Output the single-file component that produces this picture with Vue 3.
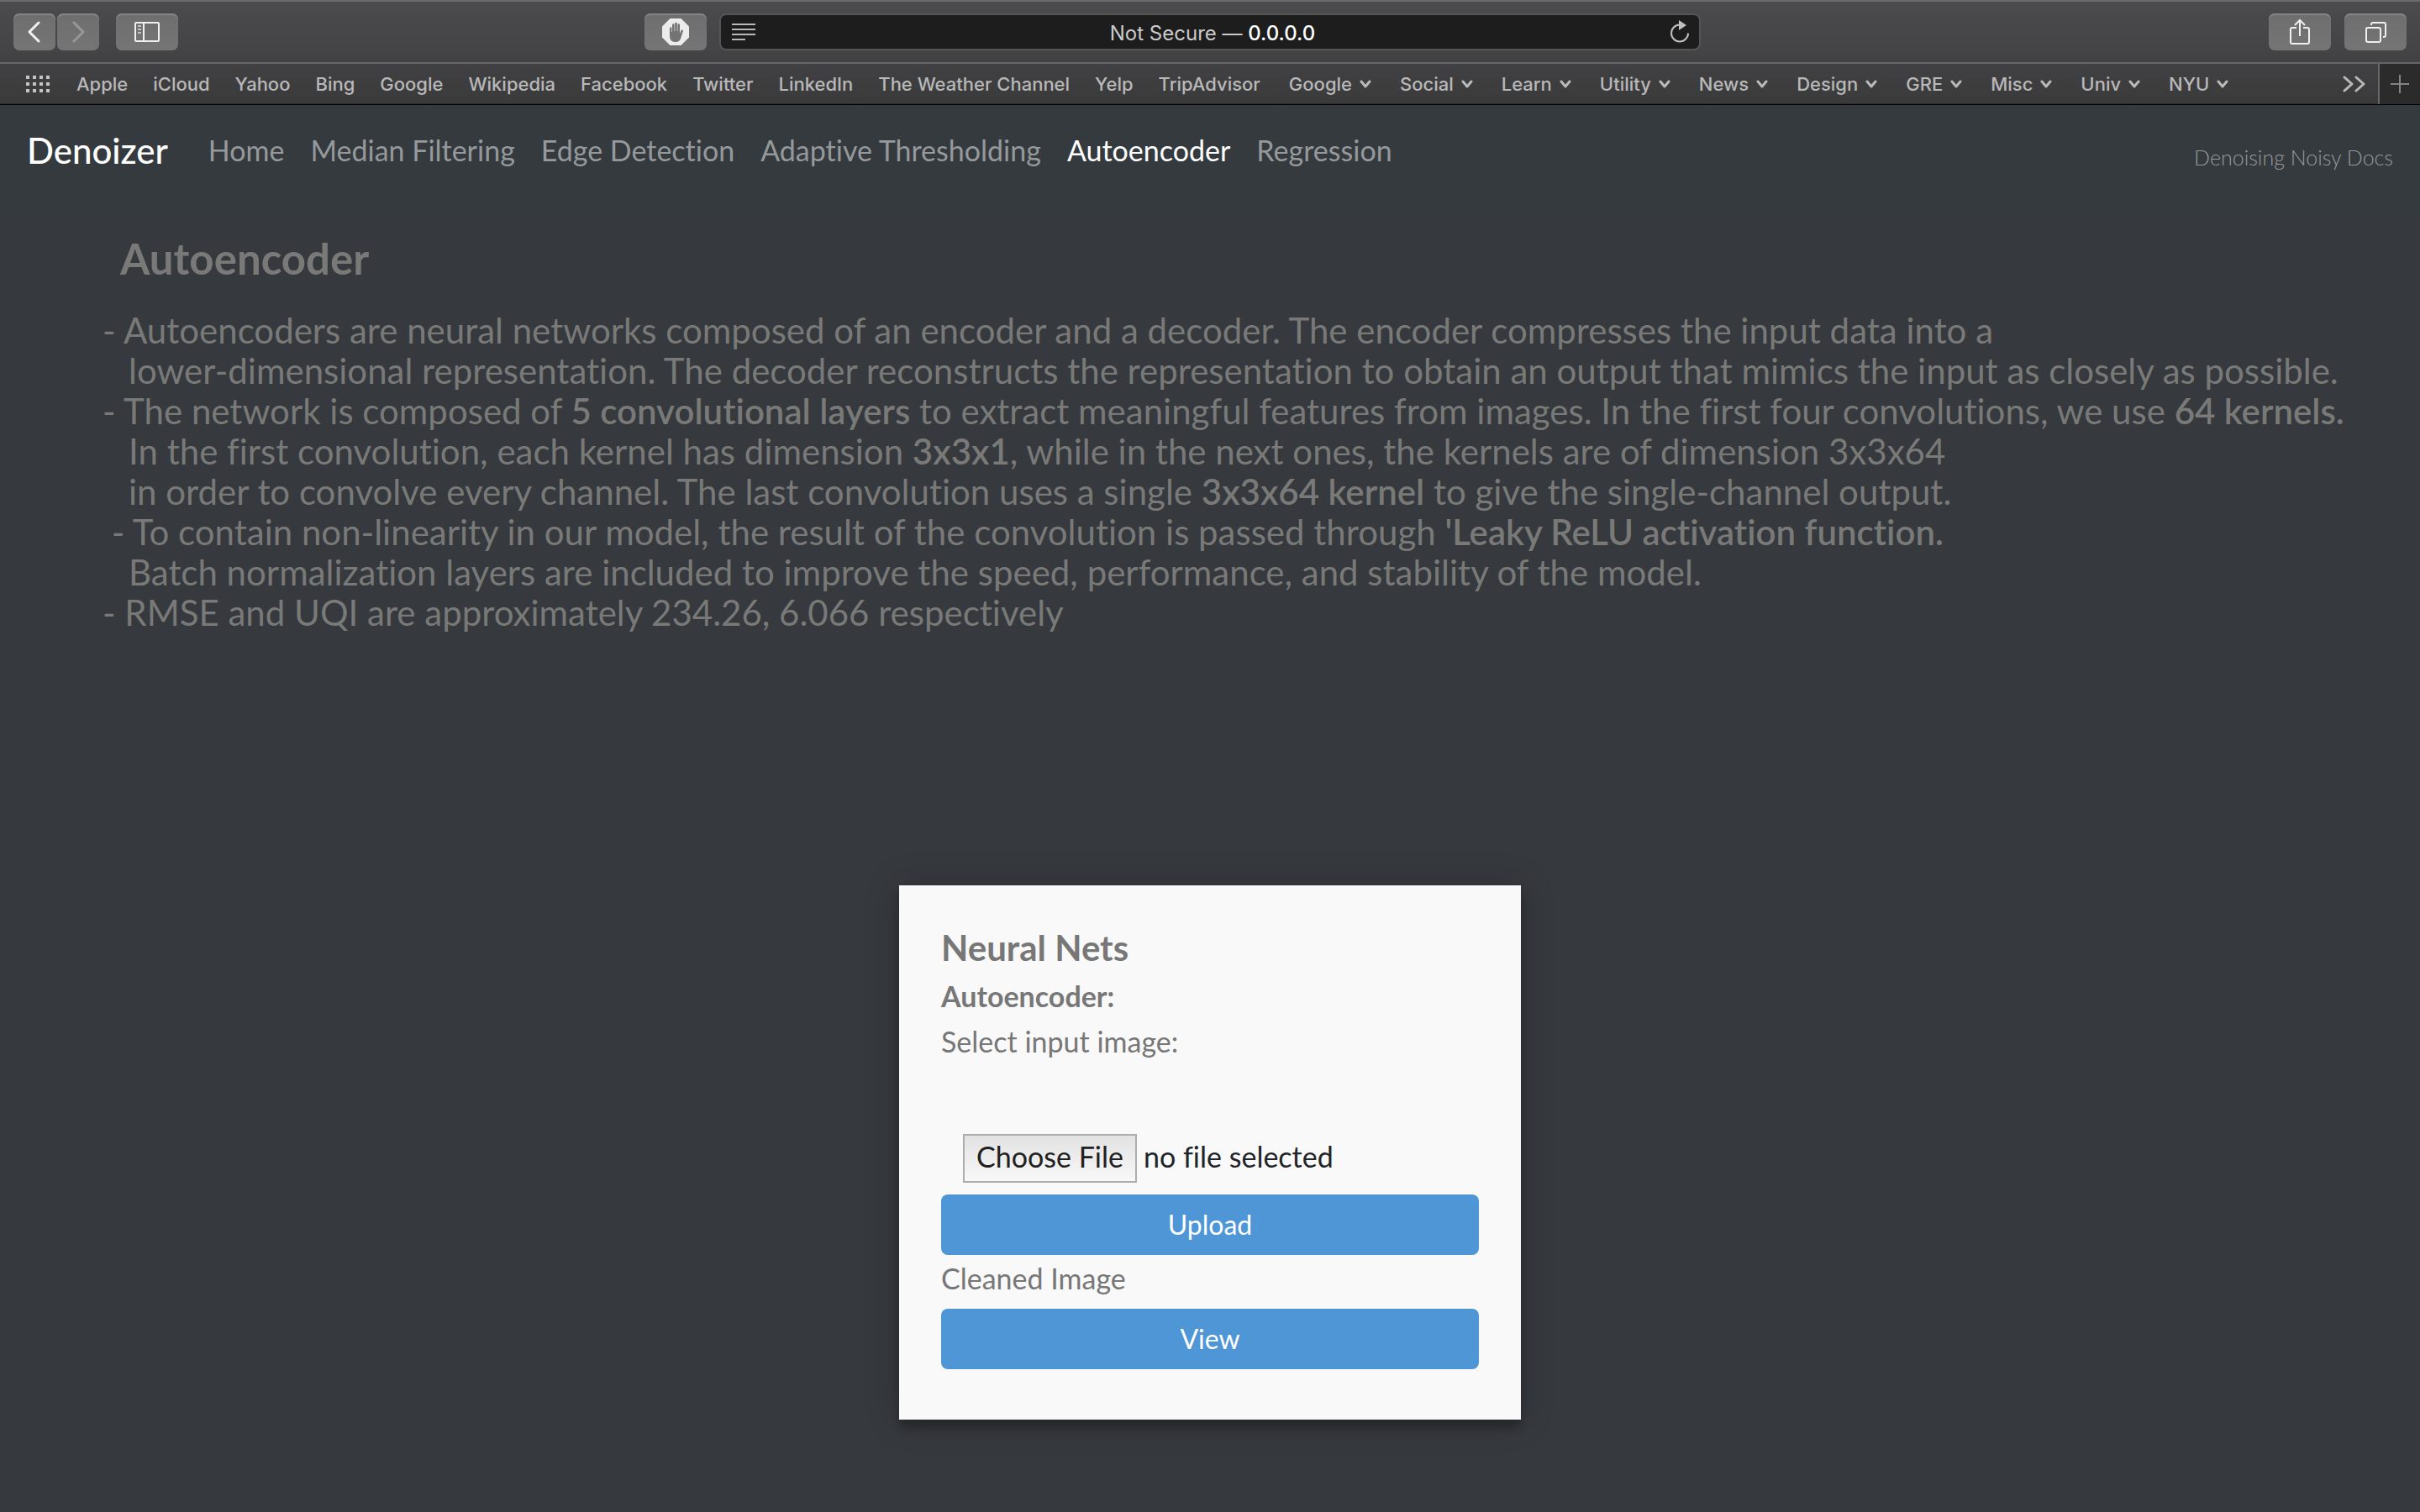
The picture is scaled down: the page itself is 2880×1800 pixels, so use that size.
<script setup>
const bookmarks = [
  'Apple', 'iCloud', 'Yahoo', 'Bing', 'Google', 'Wikipedia', 'Facebook',
  'Twitter', 'LinkedIn', 'The Weather Channel', 'Yelp', 'TripAdvisor',
]
const folders = ['Google', 'Social', 'Learn', 'Utility', 'News', 'Design', 'GRE', 'Misc', 'Univ', 'NYU']
const pages = [
  'Home', 'Median Filtering', 'Edge Detection', 'Adaptive Thresholding', 'Autoencoder', 'Regression',
]
const current = 'Autoencoder'
const dots = [0, 8, 16, 24].flatMap((x) => [0, 8, 16].map((y) => ({ x, y })))
</script>

<template>
  <div class="window">
    <header class="browser">
      <div class="toolbar">
        <div class="side">
          <div class="group">
            <button class="tool narrow" type="button" aria-label="Back">
              <svg width="20" height="28" viewBox="0 0 20 28"><path d="M15 3 4 14l11 11" stroke="#f0f0f0" stroke-width="3" fill="none" stroke-linecap="round" stroke-linejoin="round" /></svg>
            </button>
            <button class="tool narrow" type="button" aria-label="Forward">
              <svg width="20" height="28" viewBox="0 0 20 28"><path d="M5 3l11 11L5 25" stroke="#989899" stroke-width="3" fill="none" stroke-linecap="round" stroke-linejoin="round" /></svg>
            </button>
          </div>
          <button class="tool" type="button" aria-label="Show sidebar">
            <svg width="30" height="24" viewBox="0 0 30 24">
              <rect x="1" y="1" width="28" height="22" rx="1" fill="none" stroke="#f0f0f0" stroke-width="2" />
              <path d="M11 1v22" stroke="#f0f0f0" stroke-width="2" />
              <path d="M4 5h4M4 9h4M4 13h4" stroke="#c4c4c4" stroke-width="2" />
            </svg>
          </button>
          <button class="tool blocker" type="button" aria-label="Ad blocker">
            <svg width="32" height="32" viewBox="0 0 32 32">
              <path d="M9.500 0h13L32 9.500v13L22.500 32h-13L0 22.500v-13z" fill="#ececec" />
              <path d="M9 11.500a1.200 1.200 0 0 1 2.400 0V16h.6V7.500a1.300 1.300 0 0 1 2.600 0V15h.6V6a1.300 1.300 0 0 1 2.600 0v9h.6V7.500a1.300 1.300 0 0 1 2.600 0V18l1.400-3.600c.7-1.600 2.900-1 2.400.8L22 24c-1 2.700-3 4-6 4-4.500 0-7-2.500-7-7z" fill="#747475" />
            </svg>
          </button>
        </div>
        <div class="address">
          <svg width="28" height="20" viewBox="0 0 28 20"><path d="M0 1h28M0 7h28M0 13h28M0 19h16" stroke="#b9b9b9" stroke-width="2" /></svg>
          <span class="url">Not Secure — <span class="host">0.0.0.0</span></span>
          <button class="reload" type="button" aria-label="Reload">
            <svg width="24" height="28" viewBox="0 0 24 28">
              <path d="M12 5.500A10 10 0 1 0 22 15.500" fill="none" stroke="#c0c0c0" stroke-width="2" />
              <path d="M11 0l9 6-9 6z" fill="#c0c0c0" />
            </svg>
          </button>
        </div>
        <div class="side end">
          <button class="tool" type="button" aria-label="Share">
            <svg width="24" height="32" viewBox="0 0 24 32">
              <path d="M8 11H3a2 2 0 0 0-2 2v15a2 2 0 0 0 2 2h18a2 2 0 0 0 2-2V13a2 2 0 0 0-2-2h-5M12 21V2M6 8l6-6 6 6" fill="none" stroke="#f0f0f0" stroke-width="2" />
            </svg>
          </button>
          <button class="tool" type="button" aria-label="Show all tabs">
            <svg width="26" height="26" viewBox="0 0 26 26">
              <rect x="2" y="8" width="17" height="17" rx="2" fill="none" stroke="#f0f0f0" stroke-width="2" />
              <path d="M8 5V4a2 2 0 0 1 2-2h13a2 2 0 0 1 2 2v13a2 2 0 0 1-2 2h-1" fill="none" stroke="#f0f0f0" stroke-width="2" />
            </svg>
          </button>
        </div>
      </div>

      <nav class="favorites" aria-label="Favorites">
        <button class="plain" type="button" aria-label="Show favorites">
          <svg width="28" height="20" viewBox="0 0 28 20">
            <rect v-for="d in dots" :key="`${d.x}-${d.y}`" :x="d.x" :y="d.y" width="4" height="4" fill="#c4c4c4" />
          </svg>
        </button>
        <div class="links">
          <a v-for="b in bookmarks" :key="b" href="#">{{ b }}</a>
          <a v-for="f in folders" :key="f" class="folder" href="#">
            {{ f }}
            <svg width="14" height="12" viewBox="0 0 14 12"><path d="M2 3l5 6 5-6" fill="none" stroke="#bababa" stroke-width="3" stroke-linecap="round" stroke-linejoin="round" /></svg>
          </a>
        </div>
        <button class="plain more" type="button" aria-label="More favorites">
          <svg width="28" height="20" viewBox="0 0 28 20"><path d="M2 2l9 8-9 8M16 2l9 8-9 8" fill="none" stroke="#bababa" stroke-width="3" stroke-linecap="round" stroke-linejoin="round" /></svg>
        </button>
        <button class="new-tab" type="button" aria-label="New tab">
          <svg width="22" height="22" viewBox="0 0 22 22"><path d="M11 0v22M0 11h22" stroke="#858585" stroke-width="2" /></svg>
        </button>
      </nav>
    </header>

    <nav class="navbar" aria-label="Main">
      <a class="brand" href="#">Denoizer</a>
      <div class="pages">
        <a v-for="p in pages" :key="p" href="#" :class="{ active: p === current }">{{ p }}</a>
      </div>
      <span class="tagline">Denoising Noisy Docs</span>
    </nav>

    <main>
      <h1>Autoencoder</h1>
      <div class="notes">
        <p>- Autoencoders are neural networks composed of an encoder and a decoder. The encoder compresses the input data into a</p>
        <p class="cont">lower-dimensional representation. The decoder reconstructs the representation to obtain an output that mimics the input as closely as possible.</p>
        <p>- The network is composed of <b>5 convolutional layers</b> to extract meaningful features from images. In the first four convolutions, we use <b>64 kernels.</b></p>
        <p class="cont">In the first convolution, each kernel has dimension <b>3x3x1</b>, while in the next ones, the kernels are of dimension 3x3x64</p>
        <p class="cont">in order to convolve every channel. The last convolution uses a single <b>3x3x64 kernel</b> to give the single-channel output.</p>
        <p>&nbsp;- To contain non-linearity in our model, the result of the convolution is passed through <b>'Leaky ReLU activation function.</b></p>
        <p class="cont">Batch normalization layers are included to improve the speed, performance, and stability of the model.</p>
        <p>- RMSE and UQI are approximately 234.26, 6.066 respectively</p>
      </div>

      <form class="card" @submit.prevent>
        <h2>Neural Nets</h2>
        <h3>Autoencoder:</h3>
        <label for="picture">Select input image:</label>
        <div class="file">
          <input id="picture" type="file" />
          <span>no file selected</span>
        </div>
        <button class="action" type="submit">Upload</button>
        <p class="result">Cleaned Image</p>
        <button class="action" type="button">View</button>
      </form>
    </main>
  </div>
</template>

<style>
body {
  margin: 0;
  background: #36393e;
}
</style>

<style scoped>
.window {
  min-height: 100vh;
  font-family: Lato, "Open Sans", sans-serif;
  font-variant-ligatures: no-common-ligatures;
  background: #36393e;
}
button {
  font-family: inherit;
  border: 0;
  padding: 0;
  cursor: pointer;
}
a {
  color: inherit;
  text-decoration: none;
}
svg {
  display: block;
  flex: none;
}

.browser {
  font-family: Inter, "Liberation Sans", sans-serif;
}
.toolbar {
  display: grid;
  grid-template-columns: 1fr 41% 1fr;
  align-items: center;
  padding: 14px 16px;
  border-top: 2px solid #6a6b6d;
  border-bottom: 2px solid #656667;
  background: linear-gradient(#4b4b4d, #424244);
}
.side {
  display: flex;
  gap: 20px;
}
.side.end {
  gap: 16px;
  justify-content: flex-end;
}
.group {
  display: flex;
  gap: 2px;
}
.tool {
  display: flex;
  align-items: center;
  justify-content: center;
  width: 74px;
  height: 44px;
  border-radius: 7px;
  background: linear-gradient(#6e6e6f, #757576);
  box-shadow: inset 0 2px 0 #848485;
}
.narrow {
  width: 50px;
}
.blocker {
  margin: 0 15px 0 auto;
}
.address {
  box-sizing: border-box;
  display: flex;
  align-items: center;
  justify-content: space-between;
  height: 44px;
  padding: 0 11px 0 13px;
  border: 2px solid #555556;
  border-radius: 8px;
  background: #1d1d1d;
}
.url {
  padding-top: 3px;
  font-size: 24px;
  line-height: 30px;
  color: #cacaca;
}
.host {
  font-weight: 500;
  color: #fff;
}
.reload {
  background: none;
}

.favorites {
  display: flex;
  align-items: center;
  height: 48px;
  padding-left: 31px;
  border-bottom: 1px solid #000;
  box-shadow: inset 0 -1px 0 #2d2d2e;
  background: linear-gradient(#414143, #3a3a3b);
  margin-bottom: 1px;
}
.plain {
  background: none;
}
.links {
  display: flex;
  gap: 30px;
  margin-left: 32px;
  font-size: 22px;
  line-height: 28px;
  font-weight: 500;
  white-space: nowrap;
  color: #b8b8b9;
}
.folder {
  display: flex;
  align-items: center;
  gap: 9px;
  margin-left: 4px;
}
.more {
  margin-left: auto;
  margin-right: 14px;
}
.new-tab {
  display: flex;
  align-items: center;
  align-self: stretch;
  justify-content: center;
  width: 50px;
  border-left: 2px solid #656667;
  background: #2b2b2c;
}

.navbar {
  display: flex;
  align-items: center;
  padding: 29px 32px 55px;
  background: #343a3e;
}
.brand {
  font-size: 42px;
  line-height: 48px;
  font-weight: 500;
  color: #fff;
}
.pages {
  display: flex;
  gap: 31px;
  margin-left: 48px;
  font-size: 34px;
  line-height: 40px;
  color: #96999b;
}
.active {
  color: #fff;
}
.tagline {
  align-self: flex-end;
  margin-bottom: 1px;
  margin-left: auto;
  font-size: 25px;
  line-height: 30px;
  font-weight: 300;
  color: #96999b;
}

main {
  color: #797978;
}
h1,
h2,
h3,
p {
  margin: 0;
}
h1 {
  margin: 20px 0 31px 143px;
  font-size: 51px;
  line-height: 60px;
  font-weight: 700;
}
.notes {
  margin: 0 40px 0 122px;
  font-size: 42px;
  line-height: 48px;
}
.notes b {
  font-weight: 600;
}
.cont {
  padding-left: 31px;
}

.card {
  box-sizing: border-box;
  display: flex;
  flex-direction: column;
  width: 740px;
  max-width: 100%;
  margin: 301px auto 0;
  padding: 50px 50px 60px;
  font-size: 34px;
  line-height: 40px;
  color: #777;
  background: #f9f9f9;
  box-shadow: 0 0 40px rgba(0, 0, 0, 0.2), 0 10px 10px rgba(0, 0, 0, 0.24);
}
h2 {
  font-size: 42px;
  line-height: 48px;
  font-weight: 700;
}
h3 {
  margin: 14px 0;
  font-size: 34px;
  line-height: 40px;
  font-weight: 700;
}
.file {
  display: flex;
  align-items: center;
  gap: 8px;
  margin: 90px 0 14px 26px;
  color: #212529;
}
.file input {
  width: 207px;
  height: 58px;
  font-size: 0;
}
.file input::file-selector-button {
  box-sizing: border-box;
  width: 207px;
  height: 58px;
  margin: 0;
  padding: 0 0 5px;
  border: 2px solid #adadad;
  border-radius: 0;
  font: 34px Lato, "Open Sans", sans-serif;
  color: #212121;
  background: linear-gradient(#e2e2e2, #f8f8f8);
}
.file span {
  padding-bottom: 5px;
}
.action {
  height: 72px;
  border-radius: 8px;
  font-size: 32px;
  line-height: 40px;
  color: #fff;
  background: #4f96d6;
}
.result {
  margin: 8px 0 16px;
}
</style>
